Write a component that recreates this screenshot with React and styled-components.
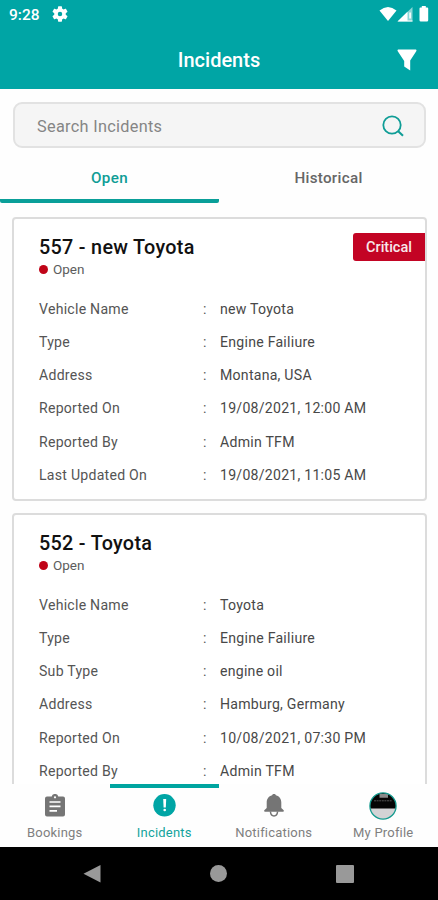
import React from "react";
import styled, { createGlobalStyle } from "styled-components";

const incidents = [
  {
    title: "557 - new Toyota",
    status: "Open",
    priority: "Critical",
    details: [
      ["Vehicle Name", "new Toyota"],
      ["Type", "Engine Failiure"],
      ["Address", "Montana, USA"],
      ["Reported On", "19/08/2021, 12:00 AM"],
      ["Reported By", "Admin TFM"],
      ["Last Updated On", "19/08/2021, 11:05 AM"],
    ],
  },
  {
    title: "552 - Toyota",
    status: "Open",
    details: [
      ["Vehicle Name", "Toyota"],
      ["Type", "Engine Failiure"],
      ["Sub Type", "engine oil"],
      ["Address", "Hamburg, Germany"],
      ["Reported On", "10/08/2021, 07:30 PM"],
      ["Reported By", "Admin TFM"],
    ],
  },
];

const GearIcon = () => (
  <svg width="16" height="16" viewBox="2 2 20 20" fill="#fff">
    <path d="M19.14 12.94c.04-.3.06-.61.06-.94 0-.32-.02-.64-.07-.94l2.03-1.58a.49.49 0 0 0 .12-.61l-1.92-3.32a.49.49 0 0 0-.59-.22l-2.39.96a7 7 0 0 0-1.62-.94l-.36-2.54A.48.48 0 0 0 13.92 2.4h-3.84a.48.48 0 0 0-.47.41l-.36 2.54c-.59.24-1.13.57-1.62.94l-2.39-.96a.48.48 0 0 0-.59.22L2.74 8.87a.48.48 0 0 0 .12.61l2.03 1.58c-.05.3-.09.63-.09.94s.02.64.07.94l-2.03 1.58a.49.49 0 0 0-.12.61l1.92 3.32c.12.22.37.29.59.22l2.39-.96c.5.38 1.03.7 1.62.94l.36 2.54c.05.24.24.41.48.41h3.84c.24 0 .44-.17.47-.41l.36-2.54a7 7 0 0 0 1.62-.94l2.39.96c.22.08.47 0 .59-.22l1.92-3.32a.48.48 0 0 0-.12-.61zM12 14.8a2.8 2.8 0 1 1 0-5.6 2.8 2.8 0 0 1 0 5.6z" />
  </svg>
);

const SignalIcons = () => (
  <svg width="52" height="18" viewBox="0 0 52 18" fill="#fff">
    <path d="M0.5 5.5Q9 -1.5 17.5 5.5L9 16z" />
    <path d="M18.5 16.5L33.5 2V16.5z" fillOpacity=".55" />
    <path d="M18.5 16.5L28.5 6.8V15.5H33.5V16.5z" />
    <path d="M30.3 7.5h1.6v6h-1.6z" />
    <path d="M40.5 3.5a1 1 0 0 1 1-1h1.3V1h4v1.5h1.4a1 1 0 0 1 1 1v11.7a1.3 1.3 0 0 1-1.3 1.3h-6.1a1.3 1.3 0 0 1-1.3-1.3z" />
  </svg>
);

const FilterIcon = () => (
  <svg width="20" height="22" viewBox="0 0 20 22" fill="#fff">
    <path d="M1 .5h18q.8.5.4 1.5L13.2 11.5V21.5L7.2 17.5V12L.6 2Q.2 1 1 .5z" />
  </svg>
);

const SearchIcon = () => (
  <svg width="22" height="22" viewBox="0 0 22 22" fill="none" stroke="#0f9d96" strokeWidth="1.8">
    <circle cx="10" cy="10" r="8.7" />
    <path d="M16.2 16.2L21 20.7" strokeWidth="2" />
  </svg>
);

const ClipboardIcon = () => (
  <svg width="20" height="24" viewBox="0 0 20 24">
    <path
      fill="#757575"
      d="M2 2.5h4.7a3.4 3.4 0 0 1 6.6 0H18a2 2 0 0 1 2 2v16a2 2 0 0 1-2 2H2a2 2 0 0 1-2-2V4.5a2 2 0 0 1 2-2z"
    />
    <circle cx="10" cy="3.3" r="1.1" fill="#fff" />
    <path d="M4.5 8h11M4.5 12.4h11M4.5 16.8h7.5" stroke="#fff" strokeWidth="1.7" />
  </svg>
);

const AlertIcon = () => (
  <svg width="23" height="24" viewBox="0 0 23 24">
    <circle cx="11.5" cy="11.3" r="11.2" fill="#00a5a5" />
    <path d="M10.2 5h3l-.4 8.5h-2.2z" fill="#fff" />
    <circle cx="11.7" cy="16" r="1.3" fill="#fff" />
  </svg>
);

const BellIcon = () => (
  <svg width="20" height="24" viewBox="0 0 20 24" fill="#757575">
    <path d="M10 0c1 0 1.6.4 1.9 1.2C15.5 2 17.3 5 17.3 8.5V14l2.4 2.3q.5 1.2-.7 1.5H1q-1.2-.3-.7-1.5L2.7 14V8.5C2.7 5 4.5 2 8.1 1.2 8.4.4 9 0 10 0z" />
    <path d="M6.4 17.5c.6 6 6.6 6 7.2 0" fill="none" stroke="#757575" strokeWidth="1.5" />
  </svg>
);

const Avatar = () => (
  <svg width="28" height="28" viewBox="0 0 28 28">
    <clipPath id="avatar">
      <circle cx="14" cy="14" r="13" />
    </clipPath>
    <g clipPath="url(#avatar)">
      <path d="M0 0h28v28H0z" fill="#d3d3d5" />
      <path d="M0 0h28v16.5H0z" fill="#050505" />
      <path d="M10.5 2h8.5v3.8h-8.5z" fill="#8a8a8a" />
      <path d="M5 8.8h18" stroke="#555" strokeWidth="1" strokeDasharray="2 .6" />
    </g>
    <circle cx="14" cy="14" r="13.1" fill="none" stroke="#149a8e" strokeWidth="1.3" />
  </svg>
);

const navItems = [
  { name: "Bookings", icon: <ClipboardIcon /> },
  { name: "Incidents", icon: <AlertIcon />, active: true },
  { name: "Notifications", icon: <BellIcon /> },
  { name: "My Profile", icon: <Avatar /> },
];

const IncidentCard = ({ incident }) => (
  <Card>
    <CardHeader>
      <div>
        <CardTitle>{incident.title}</CardTitle>
        <Status>
          <Dot />
          {incident.status}
        </Status>
      </div>
      {incident.priority && <Priority>{incident.priority}</Priority>}
    </CardHeader>
    {incident.details.map(([label, value]) => (
      <Detail key={label}>
        <span>{label}</span>
        <span>:</span>
        <Value>{value}</Value>
      </Detail>
    ))}
  </Card>
);

const App = () => {
  return (
    <>
      <GlobalStyle />
      <Screen>
        <Header>
          <StatusBar>
            <Clock>9:28</Clock>
            <GearIcon />
            <Signals>
              <SignalIcons />
            </Signals>
          </StatusBar>
          <TitleBar>
            <Title>Incidents</Title>
            <FilterButton aria-label="Filter">
              <FilterIcon />
            </FilterButton>
          </TitleBar>
        </Header>
        <SearchBox>
          <SearchInput placeholder="Search Incidents" />
          <SearchIcon />
        </SearchBox>
        <Tabs>
          <Tab $active>Open</Tab>
          <Tab>Historical</Tab>
        </Tabs>
        <List>
          {incidents.map((incident) => (
            <IncidentCard key={incident.title} incident={incident} />
          ))}
        </List>
        <BottomNav>
          {navItems.map((item) => (
            <NavItem key={item.name} $active={item.active}>
              <NavIcon>{item.icon}</NavIcon>
              {item.name}
            </NavItem>
          ))}
        </BottomNav>
        <SystemBar>
          <svg width="18" height="20" viewBox="0 0 18 20" fill="#999">
            <path d="M17.5 1v17.5L.5 9.7z" />
          </svg>
          <HomeButton />
          <RecentButton />
        </SystemBar>
      </Screen>
    </>
  );
};

export default App;

const GlobalStyle = createGlobalStyle`
  * {
    box-sizing: border-box;
  }
  body {
    margin: 0;
    background: #fff;
    font-family: Roboto, "Liberation Sans", sans-serif;
  }
  svg {
    display: block;
    flex-shrink: 0;
  }
`;

const Screen = styled.div`
  display: flex;
  flex-direction: column;
  width: 438px;
  height: 900px;
  overflow: hidden;
  background: #fefefe;
`;

const Header = styled.header`
  height: 89px;
  flex-shrink: 0;
  color: white;
  background: #00a5a5;
`;

const StatusBar = styled.div`
  display: flex;
  align-items: center;
  height: 28px;
  padding: 0 7px 0 9px;
`;

const Clock = styled.span`
  width: 43px;
  padding-top: 1px;
  font-size: 15.5px;
  font-weight: 500;
`;

const Signals = styled.div`
  margin-left: auto;
`;

const TitleBar = styled.div`
  display: grid;
  grid-template-columns: 1fr auto 1fr;
  align-items: center;
  height: 64px;
  padding: 0 21px;
`;

const Title = styled.h1`
  grid-column: 2;
  margin: 0;
  font-size: 20px;
  font-weight: 500;
`;

const FilterButton = styled.button`
  justify-self: end;
  padding: 0;
  border: 0;
  background: none;
`;

const SearchBox = styled.div`
  display: flex;
  align-items: center;
  flex-shrink: 0;
  height: 46px;
  margin: 13px 12px 0 13px;
  padding: 1px 20px 0 22px;
  border: 2px solid #e2e2e2;
  border-radius: 9px;
  background: #f5f5f5;
`;

const SearchInput = styled.input`
  flex: 1;
  min-width: 0;
  padding: 2px 0 0;
  border: 0;
  outline: none;
  background: none;
  font-family: inherit;
  font-size: 16.3px;
  letter-spacing: 0.3px;
  &::placeholder {
    color: #858585;
  }
`;

const Tabs = styled.div`
  display: flex;
  flex-shrink: 0;
  height: 55px;
`;

const Tab = styled.div`
  flex: 1;
  padding-top: 21px;
  border-bottom: 4px solid ${(props) => (props.$active ? "#0a9f99" : "transparent")};
  border-radius: 2px;
  color: ${(props) => (props.$active ? "#0f9d96" : "#666")};
  font-size: 15.2px;
  font-weight: 500;
  line-height: 19px;
  letter-spacing: 0.3px;
  text-align: center;
`;

const List = styled.main`
  flex: 1;
  min-height: 0;
  padding: 14px 11px 0 12px;
  overflow: hidden;
`;

const Card = styled.section`
  height: 284px;
  margin-bottom: 12px;
  padding-left: 25px;
  border: 2px solid #dcdcdc;
  border-radius: 4px;
  background: white;
`;

const CardHeader = styled.div`
  display: flex;
  justify-content: space-between;
  height: 73px;
  padding-top: 14px;
`;

const CardTitle = styled.h2`
  margin: 0;
  padding-top: 1px;
  color: #111;
  font-size: 19.8px;
  font-weight: 500;
  line-height: 27px;
  letter-spacing: 0.3px;
`;

const Status = styled.div`
  display: flex;
  align-items: center;
  gap: 5px;
  color: #5c5c5c;
  font-size: 13.5px;
  line-height: 16px;
`;

const Dot = styled.span`
  width: 9px;
  height: 9px;
  border-radius: 50%;
  background: #c00418;
`;

const Priority = styled.div`
  align-self: flex-start;
  width: 72px;
  height: 28px;
  border-radius: 3px 0 0 3px;
  background: #c30424;
  color: #f7e8ea;
  font-size: 14.5px;
  font-weight: 500;
  line-height: 30px;
  text-align: center;
`;

const Detail = styled.div`
  display: grid;
  grid-template-columns: 164px 17px 1fr;
  align-items: center;
  height: 33.25px;
  color: #555;
  font-size: 14.1px;
  letter-spacing: 0.25px;
`;

const Value = styled.span`
  color: #484848;
`;

const BottomNav = styled.nav`
  display: flex;
  flex-shrink: 0;
  height: 63px;
  background: #fefefe;
`;

const NavItem = styled.div`
  display: flex;
  flex-direction: column;
  align-items: center;
  flex: 1;
  border-top: 4px solid ${(props) => (props.$active ? "#00a5a0" : "transparent")};
  color: ${(props) => (props.$active ? "#12a39c" : "#808080")};
  font-size: 13px;
  line-height: 18px;
  letter-spacing: 0.2px;
`;

const NavIcon = styled.div`
  display: flex;
  align-items: center;
  justify-content: center;
  height: 36px;
`;

const SystemBar = styled.footer`
  display: flex;
  align-items: center;
  justify-content: space-between;
  flex-shrink: 0;
  height: 53px;
  padding: 0 84px 0 83px;
  background: black;
`;

const HomeButton = styled.span`
  width: 17px;
  height: 17px;
  border-radius: 50%;
  background: #999;
`;

const RecentButton = styled.span`
  width: 18px;
  height: 18px;
  border-radius: 1px;
  background: #999;
`;
